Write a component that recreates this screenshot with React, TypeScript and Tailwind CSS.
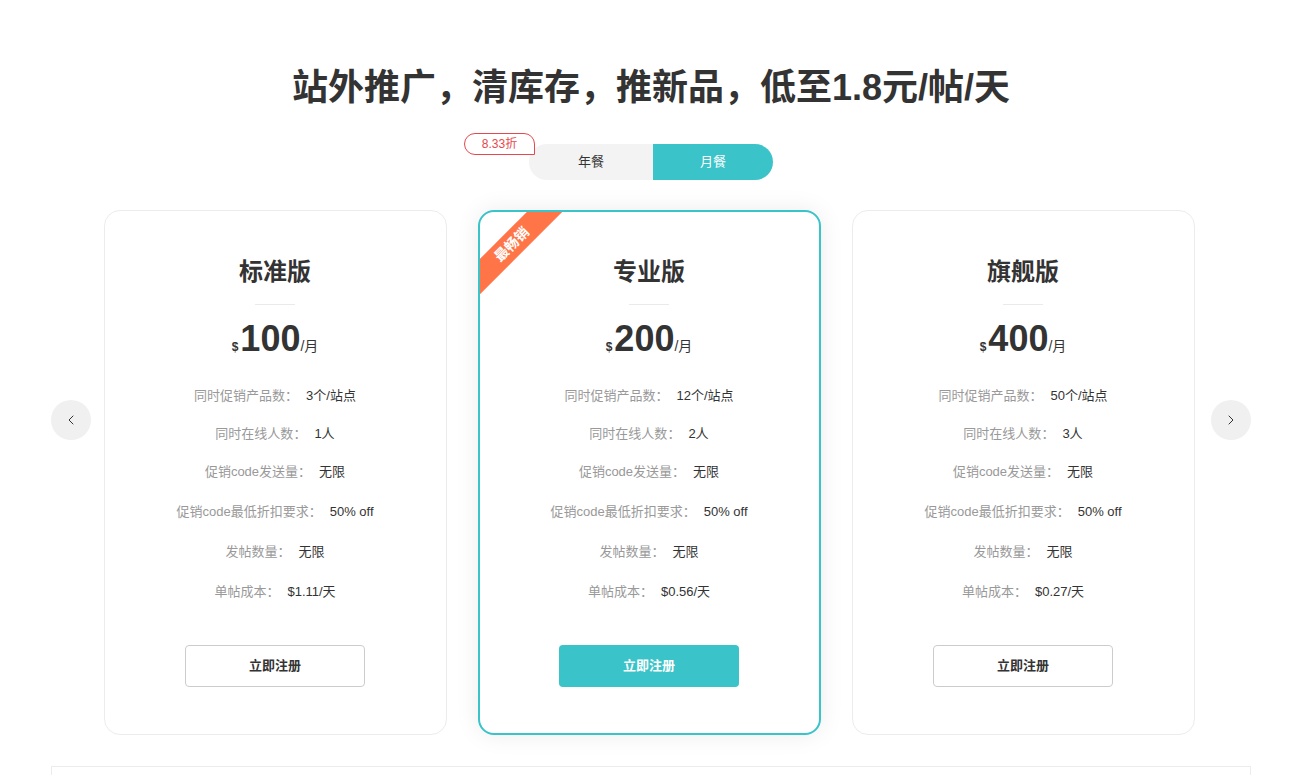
import { ChevronLeft, ChevronRight } from 'lucide-react';

const font = { fontFamily: '"Liberation Sans", "Noto Sans CJK SC", sans-serif' };

const plans = [
  {
    name: '标准版',
    price: '100',
    featured: false,
    rows: ['3个/站点', '1人', '无限', '50% off', '无限', '$1.11/天'],
  },
  {
    name: '专业版',
    price: '200',
    featured: true,
    rows: ['12个/站点', '2人', '无限', '50% off', '无限', '$0.56/天'],
  },
  {
    name: '旗舰版',
    price: '400',
    featured: false,
    rows: ['50个/站点', '3人', '无限', '50% off', '无限', '$0.27/天'],
  },
];

const labels = ['同时促销产品数', '同时在线人数', '促销code发送量', '促销code最低折扣要求', '发帖数量', '单帖成本'];
const rowGaps = ['mt-[27px]', 'mt-[18px]', 'mt-[18px]', 'mt-[20px]', 'mt-[20px]', 'mt-[20px]'];

function PlanCard({ plan }: any) {
  return (
    <div
      className={
        'relative w-[343px] h-[525px] rounded-2xl bg-white overflow-hidden flex flex-col items-center ' +
        (plan.featured
          ? 'border-2 border-[#3ac3c8] shadow-[0_0_24px_rgba(0,0,0,0.08)] pt-[44px]'
          : 'border border-[#ececec] pt-[45px]')
      }
    >
      {plan.featured && (
        <div className="absolute left-[-38px] top-[20px] w-[140px] h-[25px] bg-[#ff7548] -rotate-45 flex items-center justify-center text-white text-[14px] font-bold">
          最畅销
        </div>
      )}
      <h2 className="text-[24px] leading-[32px] font-bold text-[#333]">{plan.name}</h2>
      <div className="mt-4 w-10 h-px bg-[#eaeaea]" />
      <div className="mt-[14px] flex items-baseline text-[#333] h-[40px]">
        <span className="text-[12px] font-bold mr-[2px]">$</span>
        <span className="text-[36px] leading-[40px] font-bold">{plan.price}</span>
        <span className="text-[14px]">/月</span>
      </div>
      {plan.rows.map((v: string, i: number) => (
        <div key={i} className={'h-[20px] leading-[20px] text-[13px] ' + rowGaps[i]}>
          <span className="text-[#999]">{labels[i]}：</span>
          <span className="text-[#333] ml-[8px]">{v}</span>
        </div>
      ))}
      <button
        className={
          'mt-[43px] w-[180px] h-[42px] rounded text-[13px] font-bold ' +
          (plan.featured ? 'bg-[#3ac3c8] text-white' : 'bg-white border border-[#cccccc] text-[#333]')
        }
      >
        立即注册
      </button>
    </div>
  );
}

export default function App() {
  return (
    <div className="min-h-screen bg-white pt-[62px]" style={font}>
      <h1 className="text-center text-[36px] leading-[52px] font-bold text-[#333]">
        站外推广，清库存，推新品，低至1.8元/帖/天
      </h1>

      <div className="mt-[30px] flex justify-center">
        <div className="relative flex">
          <span className="absolute left-[-65px] top-[-11px] w-[71px] h-[22px] border border-[#e5484d] bg-white rounded-[11px] rounded-br-none text-[#e5484d] text-[12px] leading-[20px] text-center z-10">
            8.33折
          </span>
          <div className="w-[124px] h-[36px] bg-[#f3f3f3] rounded-l-full text-[13px] text-[#333] flex items-center justify-center">
            年餐
          </div>
          <div className="w-[120px] h-[36px] bg-[#3ac3c8] rounded-r-full text-[13px] text-white flex items-center justify-center">
            月餐
          </div>
        </div>
      </div>

      <div className="mt-[30px] w-[1200px] mx-auto flex items-start justify-between">
        <button className="mt-[190px] w-10 h-10 rounded-full bg-[#f0f0f0] flex items-center justify-center text-[#333]">
          <ChevronLeft size={16} strokeWidth={1.5} />
        </button>
        <div className="flex gap-[31px] -ml-[4px]">
          {plans.map((p) => (
            <PlanCard key={p.name} plan={p} />
          ))}
        </div>
        <button className="mt-[190px] w-10 h-10 rounded-full bg-[#f0f0f0] flex items-center justify-center text-[#333]">
          <ChevronRight size={16} strokeWidth={1.5} />
        </button>
      </div>

      <div className="mt-[31px] w-[1200px] mx-auto h-[60px] border border-[#ececec]" />
    </div>
  );
}
